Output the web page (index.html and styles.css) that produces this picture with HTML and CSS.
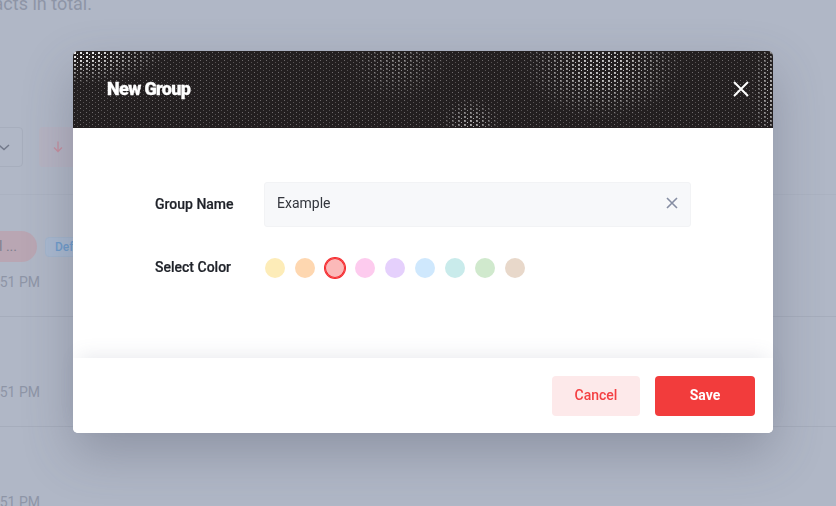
FILE: index.html
```html
<!DOCTYPE html>
<html lang="en">
<head>
  <meta charset="UTF-8" />
  <title>New Group</title>
  <link rel="stylesheet" href="styles.css">
</head>
<body>
  <div class="page">
    <p class="summary">Contacts in total.</p>

    <div class="toolbar">
      <div class="select-box">
        <svg width="14" height="14" viewBox="0 0 14 14"><path d="M2 5l5 4.500L12 5" fill="none" stroke="#737a8b" stroke-width="1.500"/></svg>
      </div>
      <div class="sort-btn">
        <svg width="14" height="14" viewBox="0 0 14 14"><path d="M7 1.500v10M3 7.500l4 4 4-4" fill="none" stroke="#c58f9f" stroke-width="1.300"/></svg>
      </div>
    </div>

    <div class="row first">
      <div class="tags">
        <span class="pill">l ...</span>
        <span class="badge">Default</span>
      </div>
      <p class="time">1:51 PM</p>
    </div>
    <div class="row">
      <p class="time">1:51 PM</p>
    </div>
    <div class="row">
      <p class="time">1:51 PM</p>
    </div>
  </div>

  <div class="modal">
    <div class="modal-head">
      <h2>New Group</h2>
      <button class="close-btn" aria-label="Close">
        <svg width="18" height="18" viewBox="0 0 18 18"><path d="M2 2l14 14M16 2L2 16" fill="none" stroke="#fff" stroke-width="2"/></svg>
      </button>
    </div>

    <div class="modal-body">
      <div class="field">
        <label>Group Name</label>
        <div class="input-box">
          <span>Example</span>
          <svg width="12" height="12" viewBox="0 0 12 12"><path d="M1 1l10 10M11 1L1 11" fill="none" stroke="#868ea3" stroke-width="1.600"/></svg>
        </div>
      </div>
      <div class="field">
        <label>Select Color</label>
        <div class="swatches">
          <span class="swatch c1"></span>
          <span class="swatch c2"></span>
          <span class="swatch c3 selected"></span>
          <span class="swatch c4"></span>
          <span class="swatch c5"></span>
          <span class="swatch c6"></span>
          <span class="swatch c7"></span>
          <span class="swatch c8"></span>
          <span class="swatch c9"></span>
        </div>
      </div>
    </div>

    <div class="modal-foot">
      <button class="cancel-btn">Cancel</button>
      <button class="save-btn">Save</button>
    </div>
  </div>
</body>
</html>
```

FILE: styles.css
```css
* {
  box-sizing: border-box;
  font-family: 'Roboto', sans-serif;
  margin: 0;
  padding: 0;
}

html,
body {
  height: 100%;
  overflow: hidden;
}

body {
  background: #b0b7c6;
  color: #8e95a6;
}

/* page behind the dialog */
.page {
  height: 512px;
  overflow: hidden;
  margin-left: -60px;
  margin-top: -6px;
}

.summary {
  width: 152px;
  font-size: 18px;
  line-height: 19px;
  text-align: right;
}

.toolbar {
  display: flex;
  gap: 16px;
  height: 68px;
  margin-top: 114px;
  border-bottom: 1px solid #abb2c1;
}

.select-box {
  width: 83px;
  height: 40px;
  display: flex;
  align-items: center;
  justify-content: flex-end;
  padding-right: 11px;
  border: 1px solid #a7aebd;
  border-radius: 4px;
}

.sort-btn {
  width: 80px;
  height: 40px;
  display: flex;
  align-items: center;
  padding-left: 12px;
  background: #b5b3c2;
  border-radius: 4px;
}

.row {
  height: 110px;
  padding-top: 67px;
  border-bottom: 1px solid #a6adbc;
}

.row.first {
  height: 122px;
  padding-top: 36px;
}

.tags {
  display: flex;
  align-items: center;
  gap: 8px;
  margin-bottom: 12px;
}

.pill {
  width: 97px;
  height: 31px;
  border-radius: 16px;
  background: #b9a6b3;
  color: #7d7f8e;
  font-size: 14px;
  line-height: 31px;
  text-align: right;
  padding-right: 20px;
}

.badge {
  width: 70px;
  height: 20px;
  border: 1px solid #a3b5cc;
  border-radius: 4px;
  background: #a9b9d0;
  color: #6e9ccc;
  font-size: 12px;
  font-weight: 500;
  line-height: 18px;
  padding-left: 9px;
}

.time {
  font-size: 14px;
  line-height: 16px;
  width: 100px;
  text-align: right;
}

/* dialog */
.modal {
  position: fixed;
  left: 73px;
  top: 51px;
  width: 700px;
  height: 382px;
  display: flex;
  flex-direction: column;
  background: #fff;
  border-radius: 5px;
  box-shadow: 0 20px 50px rgba(70, 76, 92, 0.32);
}

.modal-head {
  position: relative;
  height: 77px;
  display: flex;
  align-items: center;
  justify-content: space-between;
  padding: 0 23px 2px 34px;
  border-radius: 5px 5px 0 0;
  overflow: hidden;
  background-color: #231f20;
  background-image:
    radial-gradient(circle at 1.5px 1.5px, #6e6a6b 0.6px, transparent 0.7px),
    radial-gradient(circle at 4.5px 3.5px, #565253 0.6px, transparent 0.7px);
  background-size: 6px 4px;
}

/* the brighter patches of the halftone */
.modal-head::before {
  content: '';
  position: absolute;
  inset: 0;
  background-image:
    radial-gradient(circle at 2px 2px, #e8e8e8 0.8px, transparent 0.9px),
    radial-gradient(circle at 4.5px 3.5px, #ffffff 0.6px, transparent 0.7px);
  background-size: 6px 4px;
  -webkit-mask-image:
    radial-gradient(ellipse 90px 34px at 6px 0, #000 20%, transparent 100%),
    radial-gradient(ellipse 50px 40px at 325px 12px, rgba(0,0,0,0.35) 10%, transparent 100%),
    radial-gradient(ellipse 80px 55px at 530px 14px, rgba(0,0,0,0.75) 25%, transparent 100%),
    radial-gradient(ellipse 30px 26px at 398px 72px, rgba(0,0,0,0.6) 10%, transparent 100%),
    radial-gradient(ellipse 24px 70px at 702px 40px, rgba(0,0,0,0.7) 15%, transparent 100%);
  mask-image:
    radial-gradient(ellipse 90px 34px at 6px 0, #000 20%, transparent 100%),
    radial-gradient(ellipse 50px 40px at 325px 12px, rgba(0,0,0,0.35) 10%, transparent 100%),
    radial-gradient(ellipse 80px 55px at 530px 14px, rgba(0,0,0,0.75) 25%, transparent 100%),
    radial-gradient(ellipse 30px 26px at 398px 72px, rgba(0,0,0,0.6) 10%, transparent 100%),
    radial-gradient(ellipse 24px 70px at 702px 40px, rgba(0,0,0,0.7) 15%, transparent 100%);
}

.modal-head h2 {
  position: relative;
  color: #fff;
  font-size: 18px;
  font-weight: 900;
  letter-spacing: -0.65px;
  -webkit-text-stroke: 0.3px #fff;
}

.close-btn {
  position: relative;
  display: flex;
  background: none;
  border: none;
  cursor: pointer;
}

.modal-body {
  flex: 1;
  padding: 54px 82px 0;
  display: flex;
  flex-direction: column;
  gap: 23px;
}

.field {
  display: flex;
  align-items: center;
}

.field label {
  width: 109px;
  font-size: 14px;
  font-weight: 500;
  color: #1f2229;
  padding-bottom: 2px;
  -webkit-text-stroke: 0.2px #1f2229;
}

.input-box {
  flex: 1;
  height: 45px;
  display: flex;
  align-items: center;
  justify-content: space-between;
  padding: 0 12px 3px 12px;
  background: #f7f8fa;
  border: 1px solid #f2f3f5;
  border-radius: 3px;
  font-size: 14px;
  color: #33363d;
}

.swatches {
  display: flex;
  gap: 10px;
  margin-left: 1px;
  height: 36px;
  align-items: center;
}

.swatch {
  width: 20px;
  height: 20px;
  border-radius: 50%;
}

.c1 { background: #fdecb8; }
.c2 { background: #fed7b0; }
.c3 { background: #fbb9b9; }
.c4 { background: #fdcbee; }
.c5 { background: #e5d0fc; }
.c6 { background: #cfe8fd; }
.c7 { background: #c9ebeb; }
.c8 { background: #d0e9cd; }
.c9 { background: #e8d8ca; }

.swatch.selected {
  box-shadow: 0 0 0 1px #f5282c, inset 0 0 0 1px #f5282c;
}

.modal-foot {
  height: 75px;
  display: flex;
  align-items: center;
  justify-content: flex-end;
  gap: 15px;
  padding: 0 18px 0 0;
  border-radius: 0 0 5px 5px;
  background: #fff;
  box-shadow: 0 -8px 18px -6px rgba(90, 100, 125, 0.14);
}

.modal-foot button {
  height: 40px;
  padding-bottom: 2px;
  border: none;
  border-radius: 4px;
  font-size: 14px;
  cursor: pointer;
}

.cancel-btn {
  width: 88px;
  background: #fde9ea;
  color: #f43f42;
  font-weight: 500;
}

.save-btn {
  width: 100px;
  background: #f23c3c;
  color: #fff;
  font-weight: 700;
}
```
